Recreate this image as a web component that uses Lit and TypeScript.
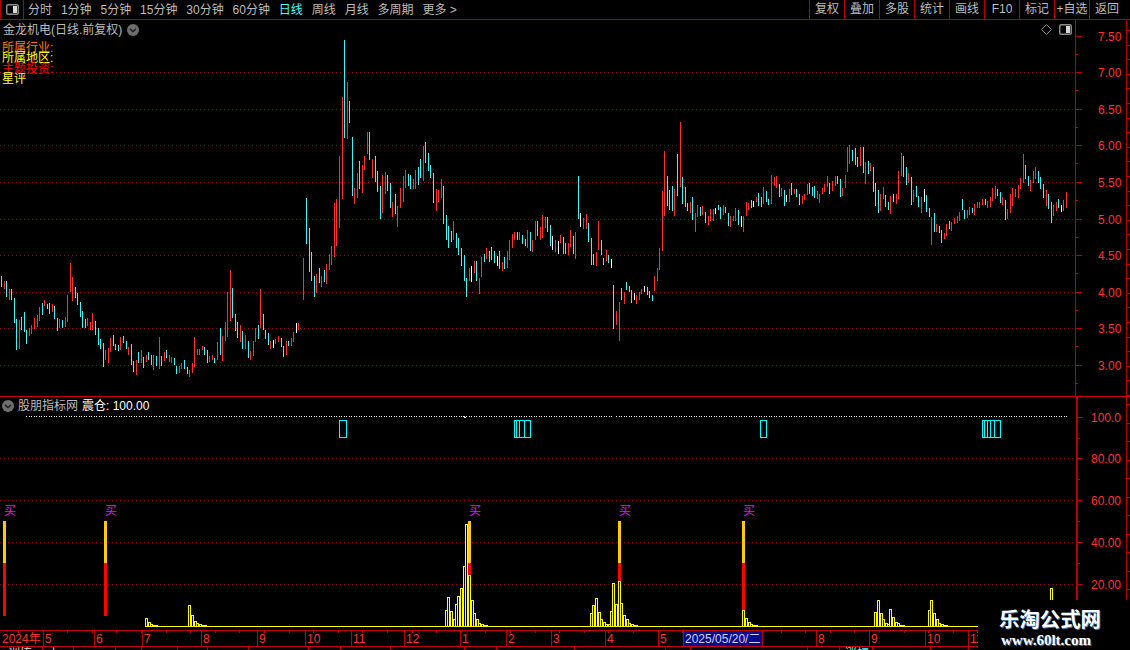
import { LitElement, html, svg, css } from "lit";
import { customElement } from "lit/decorators.js";

const CYAN = "#3ff4f4";
const RED = "#ff3030";
const WHITE = "#ffffff";
const GRID = "#900000";

type Seg = { ox: number; oy: number; d: string };
const segs: Seg[] = [
  { ox: 0, oy: 240, d: "c4,108,141 r13,123,147 c19,123,171 r28,147,180 c34,147,180 c43,174,249 c49,237,330 r58,240,327 c64,231,270 c73,216,276 c79,270,312 r88,264,288 r94,255,282 r103,234,267 r112,225,261 r118,201,243 c127,189,225 r133,180,198 c142,192,207 c148,189,222 r157,192,216 c163,198,237 c172,234,273 r178,237,264 c187,240,264 r196,231,261 r202,165,246 r211,69,156 r217,111,183 c226,141,174 c232,159,195 c241,186,231 c247,213,264 c256,237,264 r262,234,258 r271,246,270 r277,219,270 c286,243,285 c295,264,315 c301,297,327 c310,309,381 r316,330,360 r325,324,369 r331,294,336 c340,285,318 c346,312,330 c355,315,333 r361,291,330 c370,288,309 c379,303,327 r385,321,345 c394,312,375 c400,363,396 r409,360,405 c415,336,369 r424,330,369 c430,351,384 r439,345,366 c445,336,360 c454,345,375 r460,345,390 c469,348,378 r478,291,387 c484,348,378 r493,336,363 c499,330,354 r508,345,366 r514,351,369 c523,354,375 c529,378,402 r538,378,399 r544,369,387 c553,360,387 c562,381,402 r568,390,411 r577,369,399 r583,291,381 r592,327,345 r598,327,345 r607,318,330 c613,321,345 c622,330,369 r628,348,366 r637,345,360 c643,354,369 r652,306,360 c661,264,345 r667,288,363 r676,246,303 r682,156,291 r691,90,243 c697,144,234 c706,222,273 c712,246,294 r721,255,306 c727,273,327 r736,285,327 c745,303,354 r751,333,360 r760,303,348 r766,264,306 c775,255,297 r781,147,264 c790,222,270 c796,270,297 c805,279,315 r811,303,327 w820,300,324 r826,297,312 r835,288,306 c844,294,321 c850,318,351 r859,303,345 c865,303,318 r874,294,318 r880,276,306 w889,249,279 r895,249,270" },
  { ox: 300, oy: 30, d: "r10,684,810 c19,504,642 c28,594,726 c34,666,753 c43,738,801 r49,732,789 c58,714,759 r64,738,771 c73,720,756 r79,702,762 r88,672,720 r94,648,705 r103,519,681 r109,507,648 r118,378,594 r127,201,507 c133,30,324 r142,156,327 c148,213,279 c157,321,498 r163,474,522 r172,429,504 c178,393,477 r187,405,489 r193,378,420 r202,306,372 c208,306,390 r217,387,444 c226,378,456 c232,423,486 c241,468,567 r247,435,549 r256,426,492 c262,435,483 c271,459,534 r277,516,561 c286,492,552 r292,528,591 r301,474,534 r310,438,516 r316,420,474 c325,432,468 c331,435,477 r340,447,477 r346,420,477 c355,411,465 c361,387,444 r370,348,453 c376,336,399 c385,369,423 c391,405,444 c400,429,519 r409,477,543 r415,480,516 r424,447,504 c430,468,582 c439,555,630 c445,588,654 c454,603,636 r460,573,630 c469,609,654 c475,624,675 c484,654,708 c493,675,753 c499,744,801 r508,714,753 w514,708,756 r523,693,729 c529,693,753 r538,744,792 r544,681,741 c553,672,696 r559,654,687 c568,663,696 c574,651,690 c583,663,699 w592,678,708 c598,663,717 r607,696,723 c613,681,717 r622,663,714 r628,630,690 r637,612,654 r643,606,630 c652,606,630 r658,606,630 c667,615,642 c676,627,648 r682,600,654 c691,606,663 r697,630,666 r706,573,630 c712,573,618 r721,591,630 r727,555,624 r736,561,594 c742,561,606 c751,585,648 w757,618,660 r766,630,666 w775,633,672 r781,615,639 c790,621,672 c796,639,672 r805,639,675 r811,600,651 c820,618,672 r826,606,687 c835,438,567 w841,549,591 r850,564,597 r859,552,597 c865,579,636 c874,624,705 c880,672,705 r889,666,708 r895,573,660" },
  { ox: 600, oy: 110, d: "c4,390,435 c10,444,465 r19,420,453 c25,435,459 w34,447,474 c40,525,657 r49,603,645 r58,576,693 c64,534,570 r73,546,582 c79,516,540 c88,528,546 c94,540,579 w103,549,570 r109,555,582 r118,546,570 r124,537,552 w133,528,546 c142,531,555 c148,543,564 c157,555,573 r163,498,543 r172,474,513 r178,414,480 r187,243,423 r193,123,318 c202,198,288 c208,240,300 c217,228,303 r223,237,318 c232,132,258 r241,36,231 c247,201,282 c256,231,291 c262,279,303 r271,276,309 c277,261,330 r286,309,366 r292,285,321 c301,291,318 r307,288,315 c316,306,339 r325,318,345 r331,297,333 r340,297,333 w346,294,312 c355,285,300 c361,291,327 r370,285,315 c376,291,309 c385,309,348 r391,318,351 r400,318,333 r406,294,333 c415,300,345 w424,318,351 r430,318,366 r439,276,318 r445,279,300 c454,270,294 w460,273,291 r469,261,276 c475,249,288 c484,261,291 r490,231,282 c499,243,276 c505,267,285 r514,195,282 r523,201,228 r529,198,234 c538,222,261 r544,234,258 c553,240,288 w559,255,276 r568,237,276 c574,219,255 r583,237,252 c589,237,261 c598,252,285 r607,258,282 r613,252,270 r622,222,255 c628,219,252 c637,231,258 c643,228,264 r652,243,267 r658,252,279 r667,234,252 r673,222,246 r682,198,231 c688,219,252 r697,213,243 r706,198,228 c712,198,222" },
  { ox: 840, oy: 130, d: "c1,147,201 r7,174,198 r16,135,174 r22,51,126 r28,45,102 c37,60,93 c46,54,105 c52,81,111 r61,51,108 c70,51,129 r76,96,162 c85,93,132 r91,99,123 c100,111,186 c106,159,228 c115,180,249 r121,192,243 r130,171,207 c136,195,231 c145,216,240 r151,198,252 c160,192,216 r169,192,222 r175,123,207 r184,69,138 c190,78,141 c199,111,165 r205,129,159 c214,141,225 r220,180,216 c229,168,201 c235,198,231 r244,201,249 w253,177,216 c259,195,246 c268,234,261 r274,261,345 c283,249,306 r289,282,306 c298,288,309 c304,300,339 r313,309,327 r319,282,318 c328,273,297 r334,276,303 r343,264,282 r352,258,279 r358,246,273 c367,207,240 c373,240,267 r382,240,264 r388,231,255 c397,234,249 r403,222,255 r412,216,234 r418,216,234 r427,207,225 c436,207,225 r442,213,234 r451,201,231 r457,174,213 r466,168,207 c472,177,198 c481,186,219 r487,201,225 c496,210,270 r502,237,267 r511,192,249 r517,174,228 r526,177,201 r535,165,204 r541,144,177 r550,72,159 c556,105,147 c565,138,168 r571,150,183 r580,123,159 r586,111,147 c595,123,159 c601,141,177 c610,162,204 r619,180,228 c625,192,237 c634,216,279 r640,225,258 r649,216,243 c655,207,234 w664,225,246 r670,210,243 r679,186,234" },
];

const candles = segs.flatMap((s) =>
  s.d.split(" ").map((tok) => {
    const [x, t, b] = tok.slice(1).split(",").map(Number);
    const color = tok[0] === "c" ? CYAN : tok[0] === "w" ? WHITE : RED;
    const top = s.oy + Math.floor(t / 3);
    return { x: s.ox + Math.floor(x / 3), y: top, h: Math.max(1, s.oy + Math.floor(b / 3) - top), color };
  })
);

const volSegs: { ox: number; oy: number; d: number[][] }[] = [
  { ox: 0, oy: 510, d: [[435,324],[444,336],[450,342],[459,345],[465,345],[564,285],[573,315],[582,333],[588,339],[597,342],[603,345],[612,345]] },
  { ox: 370, oy: 500, d: [[225,330],[231,291],[240,333],[249,357],[255,312],[261,288],[270,264],[279,198],[285,72],[294,225],[303,300],[309,339],[318,357],[324,369],[333,372],[339,375],[345,375],[660,339],[666,315],[675,294],[684,336],[690,357],[699,366],[705,372],[714,372],[720,333],[726,249],[735,312],[744,243],[750,309],[759,345],[768,357],[774,369],[783,372],[789,375],[795,375],[1116,330],[1125,354],[1134,366],[1140,372],[1149,375],[1155,375]] },
  { ox: 770, oy: 500, d: [[312,336],[321,300],[330,339],[336,357],[345,369],[351,372],[357,327],[366,351],[375,366],[381,369],[390,375],[396,375],[474,330],[480,300],[489,339],[498,357],[504,369],[513,372],[519,375],[525,375],[840,264]] },
];
const vols = volSegs.flatMap((s) =>
  s.d.map(([x, t]) => ({ x: s.ox + Math.floor(x / 3), y: s.oy + Math.floor(t / 3) }))
);

const buys = [
  { x: 3, redEnd: 616 },
  { x: 104, redEnd: 616 },
  { x: 468, redEnd: 575 },
  { x: 618, redEnd: 581 },
  { x: 742, redEnd: 610 },
];
const boxes: [number, number][] = [
  [339, 346],
  [514, 530], [516, 530], [519, 530], [524, 530],
  [760, 766],
  [982, 1000], [984, 1000], [987, 1000], [990, 1000], [994, 1000],
];

const priceGrid = [72, 109, 145, 182, 219, 255, 292, 328, 365];
const prices = [[36, "7.50"], [72, "7.00"], [109, "6.50"], [145, "6.00"], [182, "5.50"], [219, "5.00"], [255, "4.50"], [292, "4.00"], [328, "3.50"], [365, "3.00"]] as [number, string][];
const volGrid = [458, 500, 542, 584];
const volLabels = [[417, "100.0"], [458, "80.00"], [500, "60.00"], [542, "40.00"], [584, "20.00"]] as [number, string][];

const times = [[43, "5"], [94, "6"], [142, "7"], [201, "8"], [257, "9"], [305, "10"], [351, "11"], [404, "12"], [460, "1"], [506, "2"], [551, "3"], [605, "4"], [658, "5"], [816, "8"], [869, "9"], [925, "10"], [968, "11"]] as [number, string][];
const stripSeps = [42, 73, 115, 141, 177, 207, 248, 308, 340, 390, 464, 496, 574, 665, 690, 807, 839, 872, 930, 968];

const tabs = ["分时", "1分钟", "5分钟", "15分钟", "30分钟", "60分钟", "日线", "周线", "月线", "多周期", "更多 >"];
const tools = ["复权", "叠加", "多股", "统计", "画线", "F10", "标记", "+自选", "返回"];

const range = (from: number, to: number, step: number) => {
  const out: number[] = [];
  for (let v = from; v < to; v += step) out.push(Math.round(v));
  return out;
};

const grid = (ys: number[], width: number) =>
  ys.map((y) => svg`<line x1="0" x2=${width} y1=${y + 0.5} y2=${y + 0.5} stroke=${GRID} stroke-dasharray="1 3"></line>`);

const chevronIcon = () => html`<svg width="12" height="12" viewBox="0 0 12 12">
  <circle cx="6" cy="6" r="6" fill="#6e6e6e"></circle>
  <path d="M3 4.8 L6 7.8 L9 4.8" fill="none" stroke="#1c1c1c" stroke-width="1.4"></path>
</svg>`;

const panelIcon = () => html`<svg width="13" height="11" viewBox="0 0 13 11">
  <rect x="0.75" y="0.75" width="11.5" height="9.5" rx="1.5" fill="none" stroke="#8a8a8a" stroke-width="1.5"></rect>
  <rect x="7" y="2" width="4" height="7" fill="#d8d8d8"></rect>
</svg>`;

@customElement("app-root")
export class AppRoot extends LitElement {
  static styles = css`
    :host {
      display: block;
      position: relative;
      width: 1130px;
      height: 650px;
      overflow: hidden;
      background: #000;
      font-family: "Liberation Sans", "Noto Sans CJK SC", sans-serif;
      font-size: 12px;
      line-height: 12px;
    }
    svg { display: block; }
    .toolbar {
      display: flex;
      align-items: center;
      height: 19px;
      border-bottom: 1px solid #b40000;
      color: #bdbdbd;
    }
    .logo {
      display: flex;
      align-items: center;
      justify-content: center;
      box-sizing: border-box;
      width: 24px;
      height: 19px;
      border-left: 1px solid #b40000;
      border-right: 1px solid #b40000;
    }
    .tabs { display: flex; gap: 8.9px; padding-left: 4px; flex: 1; }
    .active { color: #40ffff; }
    .tools { display: flex; }
    .tool {
      box-sizing: border-box;
      width: 35px;
      height: 19px;
      line-height: 19px;
      text-align: center;
      border-left: 1px solid #b40000;
      white-space: nowrap;
    }
    .tool:last-child { width: 41px; padding-right: 6px; }
    .main {
      display: flex;
      height: 376px;
      border-bottom: 1px solid #c80000;
    }
    .plot { position: relative; width: 1075px; }
    .main-axis { width: 54px; border-left: 1px solid #b40000; }
    .title {
      position: absolute;
      left: 3px;
      top: 4px;
      display: flex;
      align-items: center;
      gap: 5px;
      color: #bdbdbd;
    }
    .info { position: absolute; left: 2px; top: 23px; }
    .info div { height: 10.3px; line-height: 10.3px; white-space: nowrap; }
    .i1 { color: #ff8000; }
    .i2 { color: #ffff00; }
    .i3 { color: #ff0000; }
    .i4 { color: #ffff40; }
    .marks {
      position: absolute;
      right: 3px;
      top: 4px;
      display: flex;
      align-items: center;
      gap: 7px;
    }
    .lower { display: flex; height: 233px; }
    .lower-plot { position: relative; width: 1076px; }
    .lower-axis { width: 52px; border-left: 2px solid #b40000; }
    .lower-head {
      position: absolute;
      left: 2px;
      top: 2px;
      display: flex;
      align-items: center;
      gap: 4px;
      color: #bdbdbd;
      height: 13px;
    }
    .val { color: #fff; }
    .time { height: 15px; border-top: 1px solid #c80000; border-bottom: 1px solid #c80000; }
    .strip { height: 3px; overflow: hidden; }
    .mark {
      position: absolute;
      right: 0;
      bottom: 0;
      box-sizing: border-box;
      width: 152px;
      height: 50px;
      padding: 6px 0 0 21px;
      background: #000;
      color: #fff;
      font-weight: 700;
      text-shadow: 1px 1px 0 #3a6ea8;
    }
    .mark-cn {
      font-family: "Noto Sans CJK SC", sans-serif;
      font-size: 20.4px;
      line-height: 24px;
      white-space: nowrap;
    }
    .mark-en {
      font-family: "Liberation Serif", serif;
      font-size: 15px;
      line-height: 14px;
      margin-top: 3px;
      padding-left: 2px;
    }
  `;

  render() {
    return html`
      <div class="toolbar">
        <div class="logo">${panelIcon()}</div>
        <div class="tabs">
          ${tabs.map((t) => html`<span class=${t === "日线" ? "active" : ""}>${t}</span>`)}
        </div>
        <div class="tools">${tools.map((t) => html`<div class="tool">${t}</div>`)}</div>
      </div>

      <div class="main">
        <div class="plot">
          <svg width="1075" height="376" viewBox="0 20 1075 376" shape-rendering="crispEdges">
            ${grid(priceGrid, 1075)}
            ${candles.map((c) => svg`<rect x=${c.x} y=${c.y} width="1" height=${c.h} fill=${c.color}></rect>`)}
          </svg>
          <div class="title"><span>金龙机电(日线.前复权)</span>${chevronIcon()}</div>
          <div class="info">
            <div class="i1">所属行业:</div>
            <div class="i2">所属地区:</div>
            <div class="i3">主题投资:</div>
            <div class="i4">星评</div>
          </div>
          <div class="marks">
            <svg width="11" height="11" viewBox="0 0 11 11"><path d="M5.5 0.5 L10.5 5.5 L5.5 10.5 L0.5 5.5 Z" fill="none" stroke="#8a8a8a"></path></svg>
            ${panelIcon()}
          </div>
        </div>
        <div class="main-axis">
          <svg width="54" height="376" viewBox="1076 20 54 376">
            <g shape-rendering="crispEdges" fill="#b40000">
              ${prices.map(([y]) => svg`<rect x="1076" y=${y} width="6" height="1"></rect>`)}
              ${prices.map(([y]) => svg`<rect x="1076" y=${y + 18} width="2" height="1"></rect>`)}
              <rect x="1126" y="20" width="1" height="376"></rect>
              ${range(30, 396, 14.6).map((y) => svg`<rect x="1127" y=${y} width="3" height="1"></rect>`)}
            </g>
            ${prices.map(([y, t]) => svg`<text x="1098" y=${y + 4.5} fill=${RED} font-size="12">${t}</text>`)}
          </svg>
        </div>
      </div>

      <div class="lower">
        <div class="lower-plot">
          <svg width="1076" height="233" viewBox="0 397 1076 233" shape-rendering="crispEdges">
            ${grid(volGrid, 1076)}
            <line x1="26" x2="612" y1="416.5" y2="416.5" stroke="#fff" stroke-dasharray="1 1.5"></line>
            <line x1="616" x2="1067" y1="416.5" y2="416.5" stroke="#fff" stroke-dasharray="1 1.5"></line>
            <path d="M463.5 416.5 L465 418 L466.5 416.5" fill="none" stroke="#fff"></path>
            ${boxes.map(([x, r]) => svg`<rect x=${x + 0.5} y="420.5" width=${r - x} height="17" fill="none" stroke="#00ffff"></rect>`)}
            ${buys.map(
              (b) => svg`
                <rect x=${b.x} y="521" width="3" height="42" fill="#ffcc00"></rect>
                <rect x=${b.x} y="563" width="3" height=${b.redEnd - 563} fill="#ff0000"></rect>
              `
            )}
            ${vols.map((v) => svg`<rect x=${v.x + 0.5} y=${v.y + 0.5} width="2" height=${626 - v.y} fill="none" stroke="#ffff00"></rect>`)}
            <rect x="145" y="626" width="833" height="1" fill="#ffff00"></rect>
            ${buys.map((b) => svg`<text x=${b.x + 1} y="515" fill="#f010f0" font-size="12" font-family="Noto Sans CJK SC">买</text>`)}
          </svg>
          <div class="lower-head">
            ${chevronIcon()}
            <span>股朋指标网</span>
            <span class="val">震仓: 100.00</span>
          </div>
        </div>
        <div class="lower-axis">
          <svg width="52" height="233" viewBox="1078 397 52 233">
            <g shape-rendering="crispEdges" fill="#b40000">
              ${volLabels.map(([y]) => svg`<rect x="1078" y=${y} width="5" height="1"></rect>`)}
              ${volLabels.map(([y]) => svg`<rect x="1078" y=${y + 21} width="2" height="1"></rect>`)}
              <rect x="1126" y="397" width="1" height="203"></rect>
              ${range(404, 600, 18.5).map((y) => svg`<rect x="1127" y=${y} width="3" height="1"></rect>`)}
            </g>
            ${volLabels.map(([y, t]) => svg`<text x="1091" y=${y + 4.5} fill=${RED} font-size="12">${t}</text>`)}
          </svg>
        </div>
      </div>

      <div class="time">
        <svg width="1130" height="15" viewBox="0 631 1130 15">
          <g shape-rendering="crispEdges" fill="#b40000">
            ${range(18, 978, 24.6).map((x) => svg`<rect x=${x} y="631" width="1" height="2"></rect>`)}
            ${times.map(([x]) => svg`<rect x=${x} y="631" width="1" height="15"></rect>`)}
            <rect x="683" y="631" width="80" height="15" fill="#0a0a8c"></rect>
            <rect x="683" y="631" width="1" height="15" fill="#b40000"></rect>
            <rect x="762" y="631" width="1" height="15" fill="#b40000"></rect>
          </g>
          <text x="2" y="643" fill=${RED} font-size="12" font-family="Liberation Sans, Noto Sans CJK SC">2024年</text>
          ${times.map(([x, t]) => svg`<text x=${x + 2} y="643" fill=${RED} font-size="12">${t}</text>`)}
          <text x="685" y="643" fill="#d0d0e8" font-size="12" font-family="Liberation Sans, Noto Sans CJK SC">2025/05/20/二</text>
        </svg>
      </div>

      <div class="strip">
        <svg width="1130" height="3" viewBox="0 647 1130 3">
          <g shape-rendering="crispEdges" fill="#b40000">
            ${stripSeps.map((x) => svg`<rect x=${x} y="647" width="1" height="3"></rect>`)}
          </g>
          <text x="8" y="658" fill="#ddd" font-size="12" font-family="Noto Sans CJK SC">训练</text>
          <text x="48" y="658" fill="#ddd" font-size="12" font-family="Noto Sans CJK SC">上</text>
          <text x="845" y="658" fill="#40ffff" font-size="12" font-family="Noto Sans CJK SC">涨幅</text>
        </svg>
      </div>

      <div class="mark">
        <div class="mark-cn">乐淘公式网</div>
        <div class="mark-en">www.60lt.com</div>
      </div>
    `;
  }
}
